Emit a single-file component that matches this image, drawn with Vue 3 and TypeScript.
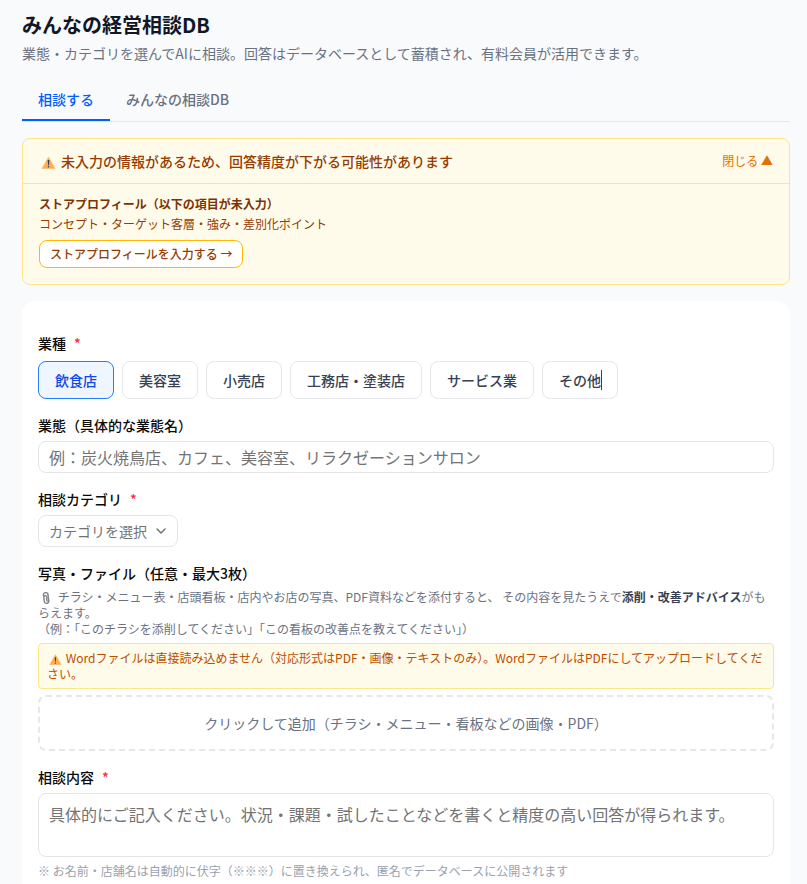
<script setup lang="ts">
import { ref } from 'vue'

const tabs = ['相談する', 'みんなの相談DB']
const activeTab = ref(tabs[0])

const industries = ['飲食店', '美容室', '小売店', '工務店・塗装店', 'サービス業', 'その他']
const industry = ref(industries[0])
const caretOn = 'その他'

const alertOpen = ref(true)
const businessType = ref('')
const category = ref('')
const content = ref('')
</script>

<template>
  <main class="page">
    <header class="header">
      <h1>みんなの経営相談DB</h1>
      <p>業態・カテゴリを選んでAIに相談。回答はデータベースとして蓄積され、有料会員が活用できます。</p>
    </header>

    <nav class="tabs">
      <button
        v-for="tab in tabs"
        :key="tab"
        type="button"
        class="tab"
        :class="{ active: tab === activeTab }"
        @click="activeTab = tab"
      >{{ tab }}</button>
    </nav>

    <section class="alert">
      <button type="button" class="alert-head" @click="alertOpen = !alertOpen">
        <span class="alert-title">
          <svg class="warn-icon" viewBox="-2.5 -3 18 16" aria-hidden="true">
            <path d="M7 1.2 L13.5 12.6 H0.5 Z" fill="#fdae50" stroke="#fbb868" stroke-width="0.7" stroke-linejoin="round" />
            <path d="M6.2 4 H7.8 L7.4 9.2 H6.6 Z" fill="#3f3a50" />
            <circle cx="7" cy="10.8" r="0.8" fill="#3f3a50" />
          </svg>
          未入力の情報があるため、回答精度が下がる可能性があります
        </span>
        <span class="alert-toggle">{{ alertOpen ? '閉じる ▲' : '開く ▼' }}</span>
      </button>
      <div v-if="alertOpen" class="alert-body">
        <p class="alert-strong">ストアプロフィール（以下の項目が未入力）</p>
        <p class="alert-items">コンセプト・ターゲット客層・強み・差別化ポイント</p>
        <a href="#profile" class="alert-link">ストアプロフィールを入力する →</a>
      </div>
    </section>

    <form class="card" @submit.prevent>
      <div class="field industry">
        <span id="industry-label" class="label">業種 <span class="required">*</span></span>
        <div class="chips" role="group" aria-labelledby="industry-label">
          <button
            v-for="item in industries"
            :key="item"
            type="button"
            class="chip"
            :class="{ selected: item === industry }"
            @click="industry = item"
          >{{ item }}<i v-if="item === caretOn" class="caret"></i></button>
        </div>
      </div>

      <div class="field">
        <label class="label" for="business-type">業態（具体的な業態名）</label>
        <input
          id="business-type"
          v-model="businessType"
          class="control"
          type="text"
          placeholder="例：炭火焼鳥店、カフェ、美容室、リラクゼーションサロン"
        />
      </div>

      <div class="field">
        <label class="label" for="category">相談カテゴリ <span class="required">*</span></label>
        <div class="select-wrap">
          <select id="category" v-model="category" class="select">
            <option value="">カテゴリを選択</option>
          </select>
          <svg class="chevron" viewBox="0 0 16 16" aria-hidden="true">
            <path d="M4 6 L8 10 L12 6" fill="none" stroke="#737373" stroke-width="1.5" stroke-linecap="round" stroke-linejoin="round" />
          </svg>
        </div>
      </div>

      <div class="field">
        <span class="label">写真・ファイル（任意・最大3枚）</span>
        <p class="help">
          <svg class="clip-icon" viewBox="0 0 17 14" aria-hidden="true">
            <g fill="none" stroke-linecap="round">
              <path d="M5.4 4.6 V3.8 C5.4 1 10 1 10 3.8 L10.8 9.6 C11 13.2 6.4 13.4 6.2 10 L5.8 6.2 C5.8 4.2 8.4 4.2 8.6 6 L9 10" stroke="#5f6268" stroke-width="1.3" />
              <path d="M5.4 4.6 V3.8 C5.4 1 10 1 10 3.8 L10.8 9.6 C11 13.2 6.4 13.4 6.2 10 L5.8 6.2 C5.8 4.2 8.4 4.2 8.6 6 L9 10" stroke="#c9cbd0" stroke-width="0.4" />
            </g>
          </svg>
          チラシ・メニュー表・店頭看板・店内やお店の写真、PDF資料などを添付すると、 その内容を見たうえで<strong>添削・改善アドバイス</strong>がもらえます。<br />（例：「このチラシを添削してください」「この看板の改善点を教えてください」）
        </p>
        <p class="notice">
          <svg class="warn-icon small" viewBox="-2.5 -3 18 16" aria-hidden="true">
            <path d="M7 1.2 L13.5 12.6 H0.5 Z" fill="#fdae50" stroke="#fbb868" stroke-width="0.7" stroke-linejoin="round" />
            <path d="M6.2 4 H7.8 L7.4 9.2 H6.6 Z" fill="#3f3a50" />
            <circle cx="7" cy="10.8" r="0.8" fill="#3f3a50" />
          </svg>
          Wordファイルは直接読み込めません（対応形式はPDF・画像・テキストのみ）。WordファイルはPDFにしてアップロードしてください。
        </p>
        <button type="button" class="dropzone">クリックして追加（チラシ・メニュー・看板などの画像・PDF）</button>
      </div>

      <div class="field">
        <label class="label" for="content">相談内容 <span class="required">*</span></label>
        <textarea
          id="content"
          v-model="content"
          class="control area"
          placeholder="具体的にご記入ください。状況・課題・試したことなどを書くと精度の高い回答が得られます。"
        ></textarea>
        <p class="note">※ お名前・店舗名は自動的に伏字（※※※）に置き換えられ、匿名でデータベースに公開されます</p>
      </div>
    </form>
  </main>
</template>

<style>
body {
  background: #f9fafc;
}
</style>

<style scoped>
.page {
  padding: 11px 17px 0 22px;
  font-family: "Noto Sans CJK JP", sans-serif;
  font-size: 14px;
  line-height: 20px;
  color: #0a0a0a;
}
.page *,
.page {
  box-sizing: border-box;
}
h1,
p {
  margin: 0;
}
button,
input,
select,
textarea {
  font: inherit;
  color: inherit;
  margin: 0;
}
button {
  cursor: pointer;
}
.header {
  display: grid;
  gap: 4px;
}
h1 {
  font-size: 20px;
  line-height: 28px;
  font-weight: 700;
  color: #101828;
}
.header p {
  color: #6a7282;
}
.tabs {
  display: flex;
  margin-top: 16px;
  border-bottom: 1px solid #e5e7eb;
}
.tab {
  padding: 10px 16px;
  border: 0;
  border-bottom: 2px solid transparent;
  background: none;
  font-weight: 500;
  color: #6a7282;
}
.tab.active {
  border-bottom-color: #0060fa;
  color: #0060fa;
}
.alert {
  margin-top: 16px;
  border: 1px solid #fee685;
  border-radius: 8px;
  background: #fffbeb;
  color: #973c00;
  overflow: hidden;
}
.alert-head {
  display: flex;
  justify-content: space-between;
  align-items: center;
  width: 100%;
  padding: 12px 16px;
  border: 0;
  background: none;
  text-align: left;
}
.alert-title {
  display: flex;
  align-items: center;
  gap: 4px;
  font-weight: 500;
}
.warn-icon {
  width: 18px;
  height: 16px;
}
.alert-toggle {
  font-size: 12px;
  color: #e17100;
}
.alert-body {
  display: flex;
  flex-direction: column;
  align-items: flex-start;
  padding: 12px 16px 16px;
  border-top: 1px solid #fee685;
  font-size: 12px;
  line-height: 16px;
}
.alert-strong {
  font-weight: 700;
  color: #7b3306;
}
.alert-items {
  margin-top: 4px;
}
.alert-link {
  margin-top: 8px;
  padding: 5px 10px;
  border: 1px solid #ffb900;
  border-radius: 8px;
  background: #fff;
  font-weight: 500;
  color: inherit;
  text-decoration: none;
}
.card {
  display: flex;
  flex-direction: column;
  gap: 16px;
  margin-top: 16px;
  padding: 32px 16px;
  border-radius: 14px;
  background: #fff;
}
.field {
  display: flex;
  flex-direction: column;
  gap: 6px;
}
.industry {
  gap: 8px;
}
.label {
  display: flex;
  gap: 8px;
  font-weight: 500;
}
.required {
  color: #fb2c36;
}
.chips {
  display: flex;
  flex-wrap: wrap;
  gap: 8px;
}
.chip {
  position: relative;
  padding: 8px 16px;
  border: 1px solid #e5e7eb;
  border-radius: 8px;
  background: #fff;
  font-weight: 500;
  color: #364153;
}
.chip.selected {
  border-color: #2080ff;
  background: #eff6ff;
  color: #0f48e6;
}
.caret {
  position: absolute;
  right: 15px;
  top: 8px;
  width: 1px;
  height: 20px;
  background: #364153;
}
.control {
  width: 100%;
  height: 32px;
  padding: 3px 10px;
  border: 1px solid #e5e5e5;
  border-radius: 8px;
  background: #fff;
  font-size: 16px;
  line-height: 24px;
}
.control::placeholder {
  color: #737373;
  opacity: 1;
}
.area {
  display: block;
  height: 64px;
  padding: 8px 10px;
  resize: none;
}
.select-wrap {
  display: grid;
  align-self: flex-start;
  align-items: center;
}
.select {
  grid-area: 1 / 1;
  appearance: none;
  width: 140px;
  height: 32px;
  padding: 0 28px 0 10px;
  border: 1px solid #e5e5e5;
  border-radius: 8px;
  background: transparent;
  color: #737373;
}
.chevron {
  grid-area: 1 / 1;
  justify-self: end;
  width: 16px;
  height: 16px;
  margin-right: 9px;
  pointer-events: none;
}
.help {
  font-size: 12px;
  line-height: 16px;
  color: #6a7282;
}
.help strong {
  font-weight: 700;
  color: #364153;
}
.clip-icon {
  width: 17px;
  height: 14px;
  vertical-align: -3px;
}
.notice {
  padding: 6px 8px;
  border: 1px solid #fee685;
  border-radius: 4px;
  background: #fffbeb;
  font-size: 12px;
  line-height: 16px;
  color: #bb4d00;
}
.warn-icon.small {
  width: 16px;
  height: 14px;
  vertical-align: -2px;
}
.dropzone {
  padding: 16px;
  border: 2px dashed #e5e7eb;
  border-radius: 8px;
  background: #fff;
  color: #6a7282;
}
.note {
  font-size: 12px;
  line-height: 16px;
  color: #99a1af;
}
</style>
